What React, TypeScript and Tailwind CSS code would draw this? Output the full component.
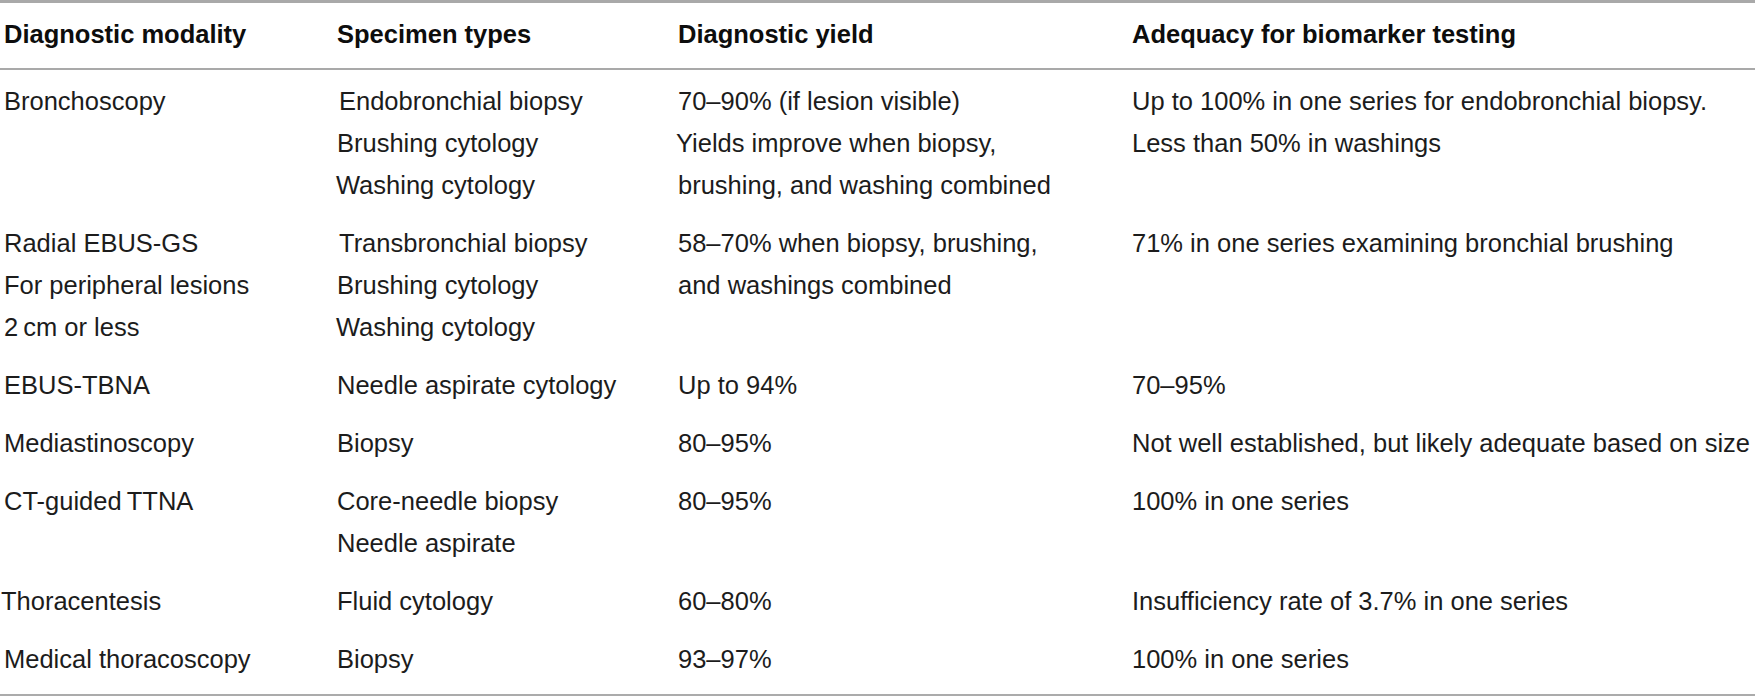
type Line = { text: string; cls?: string };
type Row = { cells: Line[][]; cls: string };

const COLS = "grid grid-cols-[333px_341px_454px_1fr]";

const HEAD = ["Diagnostic modality", "Specimen types", "Diagnostic yield", "Adequacy for biomarker testing"];

const ROWS: Row[] = [
  {
    cls: "pt-[10px] pb-[6px]",
    cells: [
      [{ text: "Bronchoscopy" }],
      [
        { text: "Endobronchial biopsy", cls: "ml-[2px]" },
        { text: "Brushing cytology" },
        { text: "Washing cytology", cls: "-ml-[1px]" },
      ],
      [
        { text: "70–90% (if lesion visible)" },
        { text: "Yields improve when biopsy,", cls: "-ml-[2px]" },
        { text: "brushing, and washing combined" },
      ],
      [
        { text: "Up to 100% in one series for endobronchial biopsy." },
        { text: "Less than 50% in washings" },
      ],
    ],
  },
  {
    cls: "pt-[10px] pb-[6px]",
    cells: [
      [{ text: "Radial EBUS-GS" }, { text: "For peripheral lesions" }, { text: "2\u2009cm or less" }],
      [
        { text: "Transbronchial biopsy", cls: "ml-[2px]" },
        { text: "Brushing cytology" },
        { text: "Washing cytology", cls: "-ml-[1px]" },
      ],
      [{ text: "58–70% when biopsy, brushing," }, { text: "and washings combined" }],
      [{ text: "71% in one series examining bronchial brushing" }],
    ],
  },
  {
    cls: "pt-[10px] pb-[6px]",
    cells: [[{ text: "EBUS-TBNA" }], [{ text: "Needle aspirate cytology" }], [{ text: "Up to 94%" }], [{ text: "70–95%" }]],
  },
  {
    cls: "pt-[10px] pb-[6px]",
    cells: [
      [{ text: "Mediastinoscopy" }],
      [{ text: "Biopsy" }],
      [{ text: "80–95%" }],
      [{ text: "Not well established, but likely adequate based on size" }],
    ],
  },
  {
    cls: "pt-[10px] pb-[6px]",
    cells: [
      [{ text: "CT-guided\u2009TTNA" }],
      [{ text: "Core-needle biopsy" }, { text: "Needle aspirate" }],
      [{ text: "80–95%" }],
      [{ text: "100% in one series" }],
    ],
  },
  {
    cls: "pt-[10px] pb-[6px]",
    cells: [
      [{ text: "Thoracentesis", cls: "-ml-[3px]" }],
      [{ text: "Fluid cytology" }],
      [{ text: "60–80%" }],
      [{ text: "Insufficiency rate of 3.7% in one series" }],
    ],
  },
  {
    cls: "pt-[10px] pb-[14px] border-b-2 border-[#ababab]",
    cells: [[{ text: "Medical thoracoscopy" }], [{ text: "Biopsy" }], [{ text: "93–97%" }], [{ text: "100% in one series" }]],
  },
];

export default function App() {
  return (
    <div className="w-[1755px] h-[697px] overflow-hidden bg-white font-['Liberation_Sans',Arial,sans-serif] text-[25.5px] leading-[42px] text-[#1c1c1c]">
      {/* header */}
      <div className={`${COLS} border-t-[3px] border-b-2 border-[#a9a9a9] pt-[10px] pb-[13px]`}>
        {HEAD.map((h) => (
          <div key={h} className="pl-[4px] font-bold text-[#0d0d0d] whitespace-nowrap">
            {h}
          </div>
        ))}
      </div>

      {ROWS.map((row, i) => (
        <div key={i} className={`${COLS} ${row.cls}`}>
          {row.cells.map((lines, j) => (
            <div key={j} className="pl-[4px] whitespace-nowrap">
              {lines.map((ln) => (
                <div key={ln.text} className={ln.cls}>
                  {ln.text}
                </div>
              ))}
            </div>
          ))}
        </div>
      ))}
    </div>
  );
}
